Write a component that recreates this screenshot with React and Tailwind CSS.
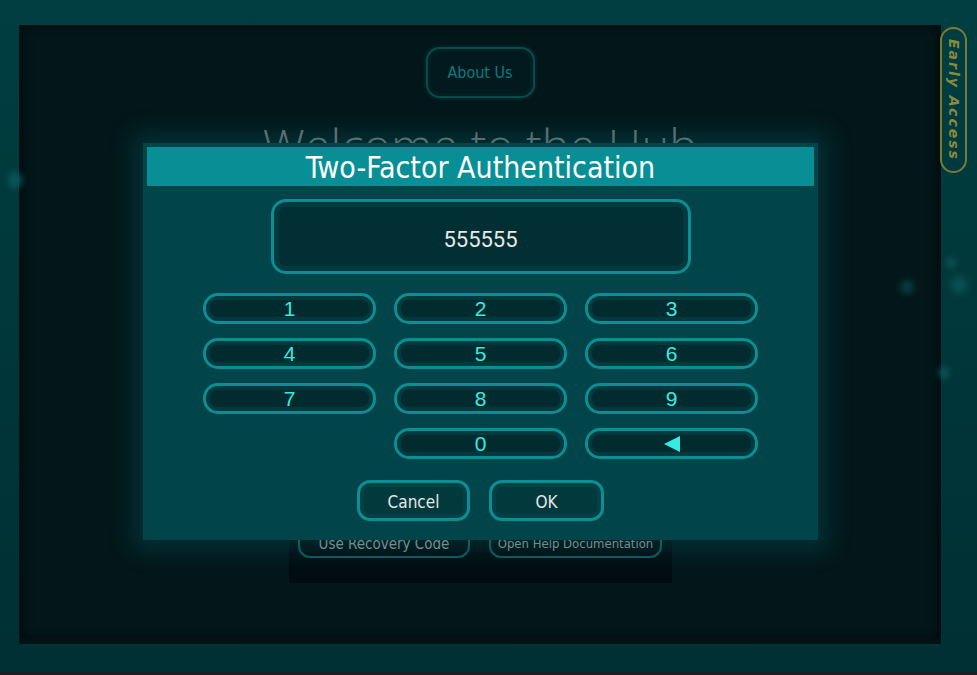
import React from "react";

const cond = { fontFamily: '"DejaVu Sans Condensed", "Liberation Sans Narrow", Roboto, sans-serif' };

function Key({ children }) {
  return (
    <div className="h-[31px] w-[173px] rounded-[15px] border-[3px] border-[#0b8f95] bg-[#012b2e] shadow-[inset_0_0_0_4px_#023a3d] flex items-center justify-center text-[21px] leading-none text-[#35ebe2]" style={{ fontFamily: '"Liberation Sans", Arial, sans-serif' }}>
      {children}
    </div>
  );
}

export default function App() {
  const keys = ["1", "2", "3", "4", "5", "6", "7", "8", "9"];
  return (
    <div className="relative w-[977px] h-[675px] overflow-hidden bg-[#1c2024]">
      <div className="h-[672px] bg-gradient-to-b from-[#003e42] to-[#003033] pt-[25px] pl-[19px] flex">
        {/* inner dark panel */}
        <div className="relative w-[922px] h-[619px] bg-[#03171a] border-b-[6px] border-[#021114] shadow-[inset_6px_0_8px_rgba(0,0,0,0.35),inset_-6px_0_8px_rgba(0,0,0,0.35)] flex flex-col items-center pt-[22px]">
          <div className="w-[109px] h-[51px] rounded-[14px] border-2 border-[#0a4a4e] bg-[#021a1d] shadow-[inset_0_0_0_3px_#031f22,0_0_4px_rgba(10,110,115,0.4)] flex items-center justify-center text-[16px] text-[#0b7b80]" style={cond}>
            About Us
          </div>
          <div className="mt-[20px] h-[25px] overflow-hidden">
            <div className="pt-[5px] text-[47px] leading-none text-[#6a6e6f] whitespace-nowrap" style={{ fontFamily: '"Open Sans", sans-serif', fontWeight: 300 }}>
              Welcome to the Hub
            </div>
          </div>
          <div className="flex-1" />
          <div className="w-[383px] h-[120px] bg-[#020d10] mb-[55px] flex items-end justify-center gap-[19px] pb-[25px]">
            <div className="w-[172px] h-[28px] rounded-[12px] border-2 border-[#0a5c60] flex items-center justify-center text-[15px] text-[#8f9494] whitespace-nowrap" style={cond}>Use Recovery Code</div>
            <div className="w-[173px] h-[28px] rounded-[12px] border-2 border-[#0a5c60] flex items-center justify-center text-[13px] text-[#8f9494] whitespace-nowrap" style={cond}>Open Help Documentation</div>
          </div>
          {/* decorative dots */}
          <div className="absolute left-[881px] top-[255px] w-[14px] h-[14px] rounded-full bg-[#0b3a3e] blur-[3px]" />
        </div>
        {/* right strip */}
        <div className="relative flex-1">
          <div className="mt-[2px] ml-[-1px] w-[27px] h-[146px] rounded-[14px] border-2 border-[#7b7a32] flex items-center justify-center">
            <span className="[writing-mode:vertical-rl] text-[14px] font-bold italic tracking-[2px] text-[#8a8a3c]" style={{ fontFamily: '"DejaVu Sans", sans-serif' }}>Early Access</span>
          </div>
          <div className="absolute left-[5px] top-[233px] w-[10px] h-[10px] rounded-full bg-[#0d5458] blur-[3px]" />
          <div className="absolute left-[10px] top-[252px] w-[16px] h-[16px] rounded-full bg-[#0d5458] blur-[4px]" />
          <div className="absolute left-[-2px] top-[342px] w-[10px] h-[12px] rounded-full bg-[#0d5458] blur-[3px]" />
        </div>
        <div className="absolute left-[8px] top-[172px] w-[14px] h-[16px] rounded-full bg-[#0d5458] blur-[3px]" />
      </div>

      {/* modal overlay */}
      <div className="absolute left-[143px] top-[143px] w-[675px] h-[397px] bg-[#014449] shadow-[0_0_22px_10px_rgba(0,120,128,0.28)] p-[4px] flex flex-col items-center">
        <div className="w-full h-[39px] bg-[#088f96] flex items-center justify-center pt-[3px] text-[30px] text-white leading-none" style={cond}>
          Two-Factor Authentication
        </div>
        <div className="mt-[13px] w-[420px] h-[75px] rounded-[15px] border-[3px] border-[#0b8f95] bg-[#012f33] shadow-[inset_0_0_0_5px_#023b3f] flex items-center justify-center pt-[5px] text-[22px] text-[#e8e8e8]" style={{ fontFamily: 'Roboto, sans-serif' }}>
          555555
        </div>
        <div className="mt-[19px] grid grid-cols-[173px_173px_173px] gap-x-[18px] gap-y-[14px]">
          {keys.map((k) => (
            <Key key={k}>{k}</Key>
          ))}
          <div />
          <Key>0</Key>
          <Key>
            <svg width="18" height="18" viewBox="0 0 18 18"><polygon points="1,9 17,1 17,17" fill="#35ebe2" /></svg>
          </Key>
        </div>
        <div className="mt-[21px] flex gap-[19px]">
          <div className="w-[113px] h-[41px] rounded-[13px] border-[3px] border-[#0b8f95] bg-[#01393d] shadow-[inset_0_0_0_4px_#024145] flex items-center justify-center pt-[4px] text-[17px] text-[#e6e6e6]" style={cond}>Cancel</div>
          <div className="w-[115px] h-[41px] rounded-[13px] border-[3px] border-[#0b8f95] bg-[#01393d] shadow-[inset_0_0_0_4px_#024145] flex items-center justify-center pt-[4px] text-[17px] text-[#e6e6e6]" style={cond}>OK</div>
        </div>
      </div>
    </div>
  );
}
